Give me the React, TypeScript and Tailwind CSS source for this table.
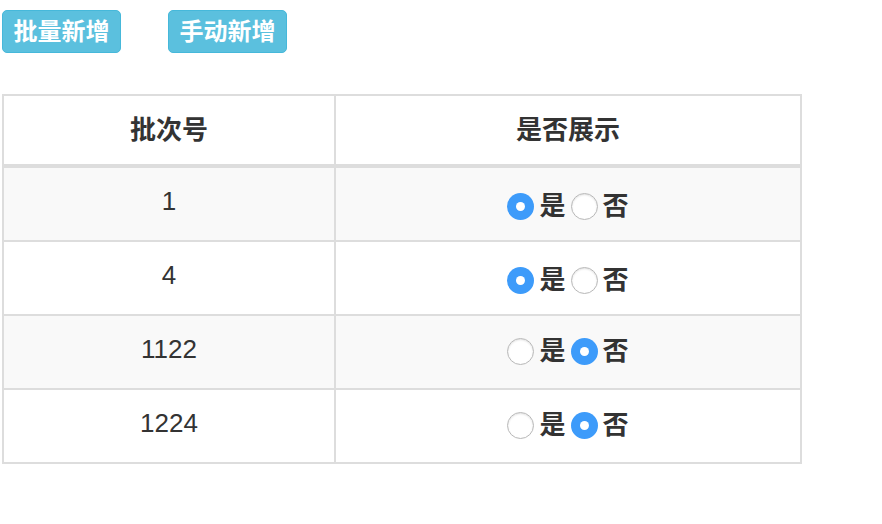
import { useState } from "react";

type Row = { id: string; show: boolean };

const initialRows: Row[] = [
  { id: "1", show: true },
  { id: "4", show: true },
  { id: "1122", show: false },
  { id: "1224", show: false },
];

function Radio({ checked, onClick }: { checked: boolean; onClick: () => void }) {
  return (
    <span
      onClick={onClick}
      className={
        checked
          ? "inline-flex items-center justify-center w-[27px] h-[27px] rounded-full bg-[#3d9bfa] cursor-pointer"
          : "inline-flex items-center justify-center w-[27px] h-[27px] rounded-full bg-white border border-[#b8b8b8] shadow-[inset_0_1px_2px_rgba(0,0,0,0.12)] cursor-pointer"
      }
    >
      {checked && <span className="w-[9px] h-[9px] rounded-full bg-white" />}
    </span>
  );
}

export default function App() {
  const [rows, setRows] = useState(initialRows);

  function setShow(idx: number, show: boolean) {
    setRows((prev) => prev.map((r, i) => (i === idx ? { ...r, show } : r)));
  }

  return (
    <div
      className="bg-white min-h-[524px] text-[#333]"
      style={{ fontFamily: '"Liberation Sans", "Noto Sans CJK SC", sans-serif' }}
    >
      <div className="flex gap-[47px] pl-[2px] pt-[10px]">
        <button
          type="button"
          className="w-[119px] h-[43px] rounded-[5px] bg-[#5bc0de] border border-[#46b8da] text-white font-bold text-[24px] leading-none"
        >
          批量新增
        </button>
        <button
          type="button"
          className="w-[119px] h-[43px] rounded-[5px] bg-[#5bc0de] border border-[#46b8da] text-white font-bold text-[24px] leading-none"
        >
          手动新增
        </button>
      </div>

      <table className="mt-[41px] ml-[2px] w-[800px] border-collapse border-2 border-[#ddd] text-[26px] text-center">
        <thead>
          <tr className="h-[71px]">
            <th className="w-[332px] border-2 border-b-4 border-[#ddd] font-bold">批次号</th>
            <th className="border-2 border-b-4 border-[#ddd] font-bold">是否展示</th>
          </tr>
        </thead>
        <tbody>
          {rows.map((r, i) => (
            <tr
              key={r.id}
              className={
                i === 0
                  ? "h-[75px] bg-[#f9f9f9]"
                  : i % 2 === 0
                    ? "h-[74px] bg-[#f9f9f9]"
                    : "h-[74px] bg-white"
              }
            >
              <td className="border-2 border-[#ddd] align-middle pb-[5px]">{r.id}</td>
              <td className="border-2 border-[#ddd] align-middle">
                <div className="inline-flex items-center font-bold pt-[3px]">
                  <Radio checked={r.show} onClick={() => setShow(i, true)} />
                  <span className="ml-[5px] mr-[5px]">是</span>
                  <Radio checked={!r.show} onClick={() => setShow(i, false)} />
                  <span className="ml-[5px]">否</span>
                </div>
              </td>
            </tr>
          ))}
        </tbody>
      </table>
    </div>
  );
}
